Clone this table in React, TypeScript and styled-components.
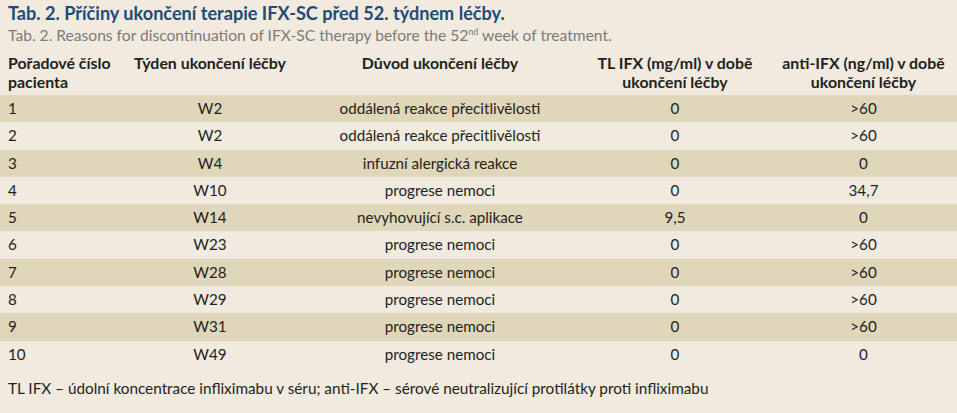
import React from "react";
import styled, { createGlobalStyle } from "styled-components";

const Global = createGlobalStyle`
  html, body { margin: 0; padding: 0; background: #f0eadf; }
  body { font-family: Lato, "Open Sans", sans-serif; color: #231f20; }
`;

const Page = styled.div`
  width: 957px;
  height: 413px;
  background: #f0eadf;
  overflow: hidden;
`;

const Title = styled.div`
  padding: 3px 0 0 8px;
  font-size: 18.1px;
  font-weight: 700;
  color: #1f4b79;
  line-height: 21px;
`;

const Subtitle = styled.div`
  padding-left: 8px;
  font-size: 15.6px;
  color: #7d7b78;
  line-height: 22px;
  sup { font-size: 9px; line-height: 0; vertical-align: 6px; }
`;

const Table = styled.div`
  display: grid;
  grid-template-columns: 130px 160px 300px 170px 197px;
  margin-top: 7px;
`;

const HeadCell = styled.div<{ $left?: boolean; $pad?: number }>`
  font-weight: 700;
  font-size: 15.9px;
  line-height: 19px;
  height: 42px;
  text-align: ${(p) => (p.$left ? "left" : "center")};
  padding-left: ${(p) => p.$pad ?? 0}px;
  white-space: nowrap;
`;

const Cell = styled.div<{ $striped: boolean; $left?: boolean; $pad?: number }>`
  background: ${(p) => (p.$striped ? "#e0d6b9" : "transparent")};
  height: 27.3px;
  line-height: 27.3px;
  font-size: 15.2px;
  text-align: ${(p) => (p.$left ? "left" : "center")};
  padding-left: ${(p) => p.$pad ?? 0}px;
  white-space: nowrap;
`;

const Footer = styled.div`
  padding: 10px 0 0 8px;
  font-size: 15.3px;
  line-height: 20px;
  white-space: nowrap;
`;

const rows: [string, string, string, string, string][] = [
  ["1", "W2", "oddálená reakce přecitlivělosti", "0", ">60"],
  ["2", "W2", "oddálená reakce přecitlivělosti", "0", ">60"],
  ["3", "W4", "infuzní alergická reakce", "0", "0"],
  ["4", "W10", "progrese nemoci", "0", "34,7"],
  ["5", "W14", "nevyhovující s.c. aplikace", "9,5", "0"],
  ["6", "W23", "progrese nemoci", "0", ">60"],
  ["7", "W28", "progrese nemoci", "0", ">60"],
  ["8", "W29", "progrese nemoci", "0", ">60"],
  ["9", "W31", "progrese nemoci", "0", ">60"],
  ["10", "W49", "progrese nemoci", "0", "0"],
];

export default function App() {
  return (
    <Page>
      <Global />
      <Title>Tab. 2. Příčiny ukončení terapie IFX-SC před 52. týdnem léčby.</Title>
      <Subtitle>
        Tab. 2. Reasons for discontinuation of IFX-SC therapy before the 52<sup>nd</sup> week of treatment.
      </Subtitle>
      <Table>
        <HeadCell $left $pad={8}>Pořadové číslo<br />pacienta</HeadCell>
        <HeadCell>Týden ukončení léčby</HeadCell>
        <HeadCell>Důvod ukončení léčby</HeadCell>
        <HeadCell>TL IFX (mg/ml) v době<br />ukončení léčby</HeadCell>
        <HeadCell $pad={10}>anti-IFX (ng/ml) v době<br />ukončení léčby</HeadCell>
        {rows.map((r, i) =>
          r.map((v, j) => (
            <Cell key={`${i}-${j}`} $striped={i % 2 === 0} $left={j === 0} $pad={j === 0 ? 8 : j === 4 ? 10 : 0}>
              {v}
            </Cell>
          ))
        )}
      </Table>
      <Footer>TL IFX – údolní koncentrace infliximabu v séru; anti-IFX – sérové neutralizující protilátky proti infliximabu</Footer>
    </Page>
  );
}
